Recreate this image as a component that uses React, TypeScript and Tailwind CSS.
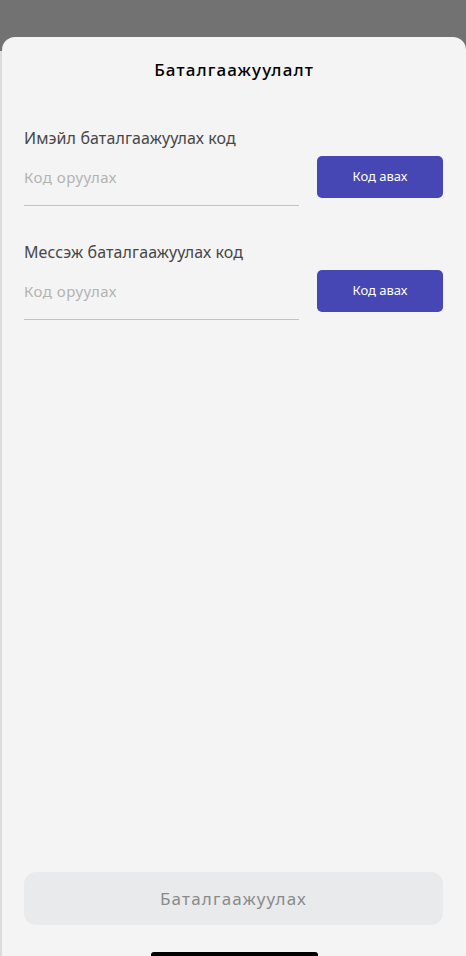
import React from 'react';

const font = { fontFamily: '"Noto Sans", "Open Sans", sans-serif' };

interface CodeFieldProps {
  label: string;
}

const CodeField: React.FC<CodeFieldProps> = ({ label }) => {
  return (
    <div className="flex flex-col pl-[22px] pr-[23px]">
      <label className="text-[16px] leading-[22px] text-[#474747] tracking-[0.1px]">{label}</label>
      <div className="mt-[7px] flex items-start gap-[18px]">
        <div className="flex-1 h-[50px] border-b border-[#c4c4c4] pt-[9px]">
          <input
            type="text"
            placeholder="Код оруулах"
            className="w-full bg-transparent text-[15px] leading-[22px] tracking-[0.5px] text-[#333] placeholder:text-[#b3b3b3] outline-none"
          />
        </div>
        <button className="w-[126px] h-[42px] rounded-[5px] bg-[#4646b4] text-white text-[13px]">
          Код авах
        </button>
      </div>
    </div>
  );
};

export default function App() {
  return (
    <div className="h-[956px] w-full flex flex-col bg-[#dcdcdc] overflow-hidden" style={font}>
      <div className="h-[37px] bg-[#727272] shrink-0" />
      <div className="relative flex-1 flex flex-col">
        <div className="absolute inset-x-0 top-0 h-[14px] bg-[#727272]" />
        <div className="relative flex-1 flex flex-col ml-[2px] rounded-t-[13px] bg-[#f4f4f4]">
          <h1 className="pt-[21px] text-center text-[17px] leading-[24px] font-medium tracking-[1.1px] text-black">
            Баталгаажуулалт
          </h1>
          <div className="mt-[45px] flex flex-col gap-[35px]">
            <CodeField label="Имэйл баталгаажуулах код" />
            <CodeField label="Мессэж баталгаажуулах код" />
          </div>
          <div className="flex-1" />
          <div className="pl-[22px] pr-[23px]">
            <button className="w-full h-[53px] rounded-[12px] bg-[#e9eaec] text-[17px] tracking-[1.2px] text-[#8a8a8a]">
              Баталгаажуулах
            </button>
          </div>
          <div className="mt-[27px] mx-auto h-[4px] w-[167px] rounded-t-[3px] bg-black" />
        </div>
      </div>
    </div>
  );
}
